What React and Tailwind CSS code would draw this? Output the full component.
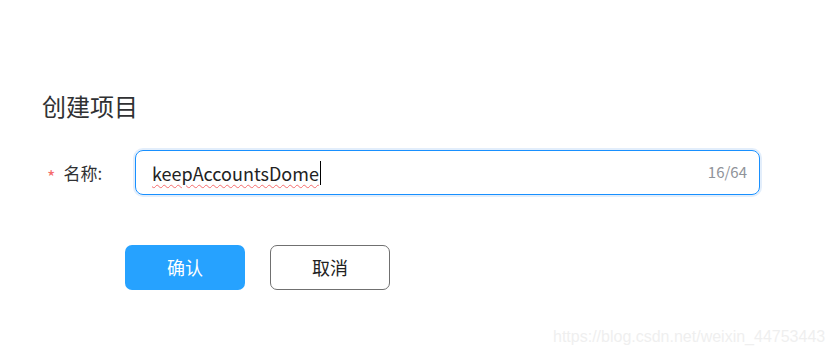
export default function App() {
  return (
    <div
      className="relative w-[833px] h-[358px] bg-white overflow-hidden"
      style={{ fontFamily: '"Noto Sans CJK SC", "Noto Sans", sans-serif' }}
    >
      <div className="pt-[90px] pl-[42px]">
        <h1 className="text-[24px] leading-[32px] text-[#303133] font-normal">创建项目</h1>
      </div>
      <div className="flex items-center mt-[28px] pl-[47px] h-[45px]">
        <div className="w-[88px] flex items-center text-[17px] text-[#303133]">
          <span className="text-[#f56c6c] mr-[8px] text-[18px] leading-none mt-[6px]">*</span>
          <span>名称:</span>
        </div>
        <div className="w-[625px] h-[45px] rounded-[8px] border border-[#1890ff] shadow-[0_0_0_2px_#e3eefb] flex items-center pl-[16px] pr-[12px]">
          <span className="text-[18px] text-[#222] underline decoration-wavy decoration-[#f56c6c] decoration-1 underline-offset-[3px] leading-none">
            keepAccountsDome
          </span>
          <span className="w-px h-[24px] bg-black ml-[1px]"></span>
          <span className="ml-auto text-[15px] text-[#909399]">16/64</span>
        </div>
      </div>
      <div className="flex gap-[25px] mt-[50px] pl-[125px]">
        <button className="w-[120px] h-[45px] rounded-[7px] bg-[#26a2ff] text-white text-[18px]">确认</button>
        <button className="w-[120px] h-[45px] rounded-[7px] border border-[#707070] bg-white text-[#222] text-[18px]">取消</button>
      </div>
      <div
        className="absolute left-[553px] top-[325px] text-[16px] text-[#efefef]"
        style={{ fontFamily: '"Liberation Sans", Arial, sans-serif' }}
      >
        https://blog.csdn.net/weixin_44753443
      </div>
    </div>
  );
}
